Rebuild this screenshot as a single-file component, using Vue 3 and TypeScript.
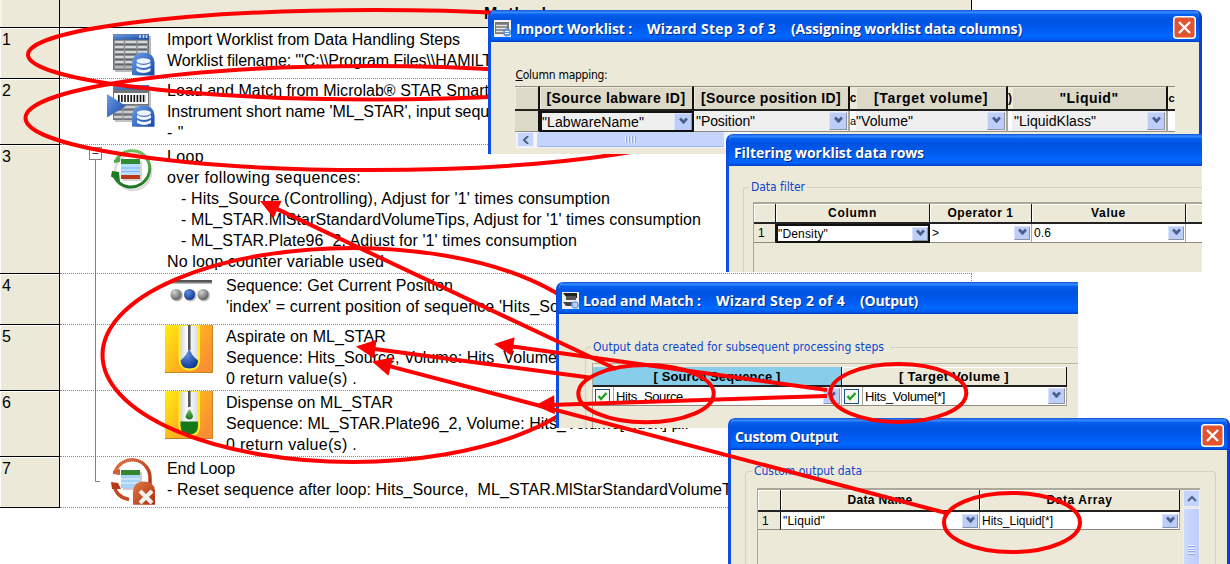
<script setup lang="ts">
interface Line { text: string; width: number; indent?: boolean }
interface Step { id: number; height: number; icon: string; nested?: boolean; lines: Line[] }
interface Arrow { from: [number, number]; to: [number, number] }

const steps: Step[] = [
  { id: 1, height: 51, icon: 'import', lines: [
    { text: 'Import Worklist from Data Handling Steps', width: 293 },
    { text: 'Worklist filename: \'"C:\\\\Program Files\\\\HAMILT', width: 325 },
  ] },
  { id: 2, height: 66, icon: 'load', lines: [
    { text: 'Load and Match from Microlab® STAR Smart', width: 322 },
    { text: "Instrument short name 'ML_STAR', input sequ", width: 322 },
    { text: '- "', width: 17 },
  ] },
  { id: 3, height: 129, icon: 'loop', lines: [
    { text: 'Loop', width: 37 },
    { text: 'over following sequences:', width: 194 },
    { text: "- Hits_Source (Controlling), Adjust for '1' times consumption", width: 429, indent: true },
    { text: "- ML_STAR.MlStarStandardVolumeTips, Adjust for '1' times consumption", width: 520, indent: true },
    { text: "- ML_STAR.Plate96_2, Adjust for '1' times consumption", width: 396, indent: true },
    { text: 'No loop counter variable used', width: 217 },
  ] },
  { id: 4, height: 51, icon: 'sequence', nested: true, lines: [
    { text: 'Sequence: Get Current Position', width: 227 },
    { text: "'index' = current position of sequence 'Hits_So", width: 333 },
  ] },
  { id: 5, height: 66, icon: 'aspirate', nested: true, lines: [
    { text: 'Aspirate on ML_STAR', width: 160 },
    { text: 'Sequence: Hits_Source, Volume: Hits_Volume', width: 331 },
    { text: '0 return value(s) .', width: 131 },
  ] },
  { id: 6, height: 66, icon: 'dispense', nested: true, lines: [
    { text: 'Dispense on ML_STAR', width: 167 },
    { text: 'Sequence: ML_STAR.Plate96_2, Volume: Hits_Volume[index] µl.', width: 463 },
    { text: '0 return value(s) .', width: 131 },
  ] },
  { id: 7, height: 51, icon: 'endloop', lines: [
    { text: 'End Loop', width: 68 },
    { text: '- Reset sequence after loop: Hits_Source,  ML_STAR.MlStarStandardVolumeT', width: 565 },
  ] },
]

const arrows: Arrow[] = [
  { from: [616, 369], to: [260, 201] },
  { from: [589, 377.5], to: [356, 346.5] },
  { from: [827, 390], to: [494, 344] },
  { from: [827, 396], to: [535, 405.5] },
  { from: [948, 513.5], to: [372, 361.5] },
]

function headPoints(a: Arrow): string {
  const dx = a.from[0] - a.to[0]
  const dy = a.from[1] - a.to[1]
  const len = Math.hypot(dx, dy)
  const ux = dx / len
  const uy = dy / len
  const bx = a.to[0] + ux * 19.5
  const by = a.to[1] + uy * 19.5
  return `${a.to[0]},${a.to[1]} ${bx - uy * 9.5},${by + ux * 9.5} ${bx + uy * 9.5},${by - ux * 9.5}`
}

function shaftEnd(a: Arrow): [number, number] {
  const dx = a.from[0] - a.to[0]
  const dy = a.from[1] - a.to[1]
  const len = Math.hypot(dx, dy)
  return [a.to[0] + (dx / len) * 15, a.to[1] + (dy / len) * 15]
}

// Tracks a label in or out so that it spans the given width in pixels.
const vFit = {
  mounted(el: HTMLElement, binding: { value: number }) {
    const n = (el.textContent ?? '').length
    const w = el.getBoundingClientRect().width
    if (n > 0) el.style.letterSpacing = `${(binding.value - w) / n}px`
  },
}
</script>

<template>
  <div class="stage">
    <div class="method">
      <div class="head">
        <div class="corner"></div>
        <div class="head-title"><span v-fit="63">Method</span></div>
      </div>
      <div v-for="s in steps" :key="s.id" class="row" :style="{ height: s.height + 'px' }">
        <div class="index">{{ s.id }}</div>
        <div class="content" :class="{ nested: s.nested }">
          <svg class="icon" width="48" height="48" viewBox="0 0 48 48">
            <defs>
              <linearGradient id="gBlue" x1="0" y1="0" x2="1" y2="1"><stop offset="0" stop-color="#6f9fe6" /><stop offset="1" stop-color="#1246a8" /></linearGradient>
              <linearGradient id="gOrange" x1="0" y1="0" x2="1" y2="0.6"><stop offset="0" stop-color="#ffef10" /><stop offset=".5" stop-color="#ffb81c" /><stop offset="1" stop-color="#f98f33" /></linearGradient>
              <linearGradient id="gGreen" x1="0" y1="0" x2="0" y2="1"><stop offset="0" stop-color="#6fbf5f" /><stop offset="1" stop-color="#1d7420" /></linearGradient>
              <linearGradient id="gRed" x1="0" y1="0" x2="1" y2="1"><stop offset="0" stop-color="#e07a4a" /><stop offset="1" stop-color="#b02c0c" /></linearGradient>
              <radialGradient id="gGrey" cx=".35" cy=".3" r=".8"><stop offset="0" stop-color="#d2d2d2" /><stop offset="1" stop-color="#555" /></radialGradient>
              <radialGradient id="gBall" cx=".35" cy=".3" r=".8"><stop offset="0" stop-color="#5f8fe0" /><stop offset="1" stop-color="#0a2f90" /></radialGradient>
              <linearGradient id="gGlass" x1="0" y1="0" x2="1" y2="0"><stop offset="0" stop-color="#c9d0dd" /><stop offset=".4" stop-color="#fff" /><stop offset="1" stop-color="#d5dae4" /></linearGradient>
            </defs>
            <g v-if="s.icon === 'import'">
              <rect x="8" y="8" width="36" height="36" fill="#888" opacity=".6" />
              <rect x="6" y="6" width="36" height="36" fill="#6b6f73" />
              <rect x="6" y="6.5" width="36" height="5" fill="url(#gBlue)" />
              <path d="M33 7v3M36.500 7v3M39.500 7v3" stroke="#cfe0ff" stroke-width="1.500" />
              <rect x="7.500" y="12.500" width="33" height="28" fill="#b4b8ba" />
              <path d="M8 16.500h32M8 21.500h32M8 26.500h32M8 31.500h32M8 36.500h32" stroke="#5f6468" stroke-width="1.800" />
              <path d="M8 14h32M8 19h32M8 24h32M8 29h32M8 34h32" stroke="#dfe2e3" stroke-width="1.700" />
              <path d="M17.500 13v27M30 13v27" stroke="#8b8f92" stroke-width="1.500" />
              <path d="M25 47V37q0-12 11-12.500q11 0 11.500 10V47.500H32Z" fill="url(#gBlue)" />
              <g fill="#eef5ff"><ellipse cx="36.500" cy="33" rx="7" ry="2.700" /><path d="M29.500 35q7 4 14 0v3q-7 4-14 0zM29.500 40q7 4 14 0v3q-7 4-14 0z" /></g>
            </g>
            <g v-else-if="s.icon === 'load'">
              <rect x="8" y="7" width="36" height="36" fill="#888" opacity=".5" />
              <rect x="6" y="6" width="36" height="35" fill="#70757a" />
              <rect x="6" y="6" width="36" height="4.500" fill="url(#gBlue)" />
              <rect x="7" y="14" width="34" height="11" fill="#fafafa" />
              <path d="M11 19.500h28" stroke="#111" stroke-width="7" stroke-dasharray="1.600 1.500" />
              <path d="M7 28h34M7 33h34M7 38h34" stroke="#c9cdcf" stroke-width="2.500" />
              <path d="M16 25v16M29 25v16" stroke="#8b8f92" />
              <path d="M0 15v23.500L19 27Z" fill="url(#gBlue)" />
              <path d="M25 47.500V39q0-12 11-12.500q11 0 11.500 10V47.800H29Z" fill="url(#gBlue)" />
              <g fill="#eef5ff"><ellipse cx="37" cy="34" rx="7" ry="2.700" /><path d="M30 36q7 4 14 0v3q-7 4-14 0zM30 41q7 4 14 0v3q-7 4-14 0z" /></g>
            </g>
            <g v-else-if="s.icon === 'loop'">
              <circle cx="26" cy="27" r="18" fill="none" stroke="#999" stroke-width="2.500" opacity=".35" />
              <path d="M8.500 17A18 18 0 0 1 40 13.500A18 18 0 1 1 8 33" fill="none" stroke="url(#gGreen)" stroke-width="3" />
              <path d="M4 31.500l1-5.500 7 1 1 10z" fill="#1d7b24" />
              <path d="M7 15l6-3v5l-6 1z" fill="#4faa49" />
              <rect x="16" y="16" width="19" height="20" fill="#999" opacity=".4" />
              <rect x="14" y="14" width="19" height="20" fill="#b9dcff" />
              <path d="M14 23h19M14 26.500h19" stroke="#7fb5f0" />
              <rect x="14" y="14" width="19" height="5" fill="#2e8b30" />
              <rect x="14" y="30" width="19" height="4" fill="#b83a18" />
            </g>
            <g v-else-if="s.icon === 'sequence'">
              <rect x="5" y="6" width="42" height="2.800" fill="#555" />
              <rect x="5" y="8.800" width="42" height="1.200" fill="#bbb" />
              <circle cx="12" cy="21.500" r="6" fill="#bbb" /><circle cx="25.500" cy="21.500" r="6" fill="#bbb" /><circle cx="39" cy="21.500" r="6" fill="#bbb" />
              <circle cx="11" cy="20.500" r="5.500" fill="url(#gGrey)" />
              <circle cx="24.500" cy="20.500" r="5.500" fill="url(#gBall)" />
              <circle cx="38" cy="20.500" r="5.500" fill="url(#gGrey)" />
            </g>
            <g v-else-if="s.icon === 'aspirate' || s.icon === 'dispense'">
              <rect width="48" height="48" fill="url(#gOrange)" />
              <path d="M0 47.500H47.500V0" fill="none" stroke="#c98325" />
              <path d="M14.500 0V34Q15 44.500 24.500 44.500T34 34V0Z" fill="url(#gGlass)" stroke="#ffee22" stroke-width="2" />
              <template v-if="s.icon === 'aspirate'">
                <path d="M24.300 0V25" stroke="#555" stroke-width="2.600" />
                <path d="M24.300 23Q26 30 33 35.500Q33 43.500 24.500 43.500T15.500 35.500Q22 30 24.300 23Z" fill="url(#gBall)" />
              </template>
              <template v-else>
                <path d="M24.300 0V16" stroke="#555" stroke-width="2.600" />
                <path d="M24.300 18Q28.500 24 28 26Q27 28.500 24.300 28.500T20.500 26Q20.500 24 24.300 18Z" fill="url(#gGreen)" />
                <path d="M15.500 30.500H33V35Q33 43.500 24.500 43.500T15.500 35Z" fill="#15781b" />
              </template>
            </g>
            <g v-else>
              <path d="M8 15A18 18 0 0 1 43 22V30" fill="none" stroke="url(#gRed)" stroke-width="3.400" />
              <path d="M7 28Q9 40 22 42.500" fill="none" stroke="#c24a22" stroke-width="3.400" />
              <path d="M4 25l7 1 3 6-9 0z" fill="#b53a18" />
              <path d="M6 14l7-2v6l-7-1z" fill="#c8603a" />
              <rect x="16" y="15" width="19" height="18" fill="#999" opacity=".5" />
              <rect x="14" y="13" width="19" height="18" fill="#a9d2f5" />
              <path d="M14 22h19M14 26h19" stroke="#e8f5ff" />
              <rect x="14" y="13" width="19" height="5" fill="#34862f" />
              <path d="M26 47.800V36q0-11 10.500-11.500q10.500 0 11.500 9V47.800H30Z" fill="url(#gRed)" />
              <path d="M33 34L45 46M45 34L33 46" stroke="#f4f1ee" stroke-width="4" />
            </g>
          </svg>
          <div class="lines">
            <div v-for="l in s.lines" :key="l.text" class="line" :class="{ indent: l.indent }">
              <span v-fit="l.width">{{ l.text }}</span>
            </div>
          </div>
        </div>
      </div>
    </div>

    <svg class="overlay" width="1230" height="564">
      <path d="M95.500 160V481.500H100" fill="none" stroke="#808080" />
      <rect x="89.500" y="147.500" width="12" height="12" fill="#fff" stroke="#808080" />
      <path d="M92.500 153.500h6" stroke="#333" />
      <g fill="none" stroke="#f00" stroke-width="4">
        <ellipse cx="374" cy="54.700" rx="346" ry="44.700" />
        <ellipse cx="370" cy="118" rx="344.500" ry="52" />
        <ellipse cx="352.500" cy="355" rx="250" ry="107" />
      </g>
    </svg>

    <section class="window import">
      <header class="title">
        <svg class="app" width="17" height="17" viewBox="0 0 17 17">
          <rect width="17" height="17" fill="#f4f4f4" />
          <rect x="1" y="2" width="14" height="12" fill="#777" />
          <path d="M2 5.500h11M2 8.500h11M2 11.500h11" stroke="#e8e8e8" stroke-width="1.300" />
          <circle cx="13" cy="12.500" r="4" fill="#5d94dd" /><path d="M11 11.500h4M11 13.500h4" stroke="#fff" />
        </svg>
        <span v-fit="116">Import Worklist :</span>
        <span v-fit="129" class="gap15">Wizard Step 3 of 3</span>
        <span v-fit="231" class="gap15">(Assigning worklist data columns)</span>
        <svg class="close" width="23" height="23" viewBox="0 0 23 23"><rect x=".75" y=".75" width="21.500" height="21.500" rx="3" fill="#e2532f" stroke="#fff" stroke-width="1.500" /><path d="M6 6L17 17M17 6L6 17" stroke="#fff" stroke-width="2.400" /></svg>
      </header>
      <div class="body">
        <div class="tahoma caption"><span v-fit="92"><u>C</u>olumn mapping:</span></div>
        <div class="grid g1">
          <div class="h"></div>
          <div class="h"><span v-fit="139">[Source labware ID]</span></div>
          <div class="h"><span v-fit="140">[Source position ID]</span></div>
          <div class="h sliver">c</div>
          <div class="h"><span v-fit="114">[Target volume]</span></div>
          <div class="h sliver">)</div>
          <div class="h"><span v-fit="59">"Liquid"</span></div>
          <div class="h sliver last">c</div>
          <div class="r no"></div>
          <div class="r focus"><span v-fit="102">"LabwareName"</span><i class="dd"></i></div>
          <div class="r"><span v-fit="59">"Position"</span><i class="dd"></i></div>
          <div class="r bit">a</div>
          <div class="r vol"><span v-fit="57">"Volume"</span><i class="dd"></i></div>
          <div class="r bit"></div>
          <div class="r"><span v-fit="82">"LiquidKlass"</span><i class="dd"></i></div>
          <div class="r bit"></div>
        </div>
        <div class="hscroll">
          <div class="sbtn"><svg width="8" height="8" viewBox="0 0 8 8"><path d="M6 0L2 4L6 8" fill="none" stroke="#4d6185" stroke-width="2" /></svg></div>
          <div class="hthumb"><i></i><i></i><i></i><i></i></div>
        </div>
      </div>
    </section>

    <section class="window filter">
      <header class="title"><span v-fit="190">Filtering worklist data rows</span></header>
      <div class="body">
        <fieldset class="tahoma">
          <legend><span v-fit="54">Data filter</span></legend>
          <div class="frame">
            <div class="grid g2">
              <div class="h"></div>
              <div class="h"><span v-fit="49">Column</span></div>
              <div class="h"><span v-fit="66">Operator 1</span></div>
              <div class="h"><span v-fit="35">Value</span></div>
              <div class="h"></div>
              <div class="r no">1</div>
              <div class="r focus"><span v-fit="50">"Density"</span><i class="dd"></i></div>
              <div class="r">&gt;<i class="dd"></i></div>
              <div class="r"><span v-fit="17">0.6</span><i class="dd"></i></div>
              <div class="r"></div>
            </div>
          </div>
        </fieldset>
      </div>
    </section>

    <section class="window load">
      <header class="title">
        <svg class="app" width="17" height="17" viewBox="0 0 17 17">
          <rect width="17" height="17" fill="#f0f0f0" />
          <path d="M1 1h14v5H5z" fill="#222" /><rect x="4" y="4" width="10" height="4" fill="#555" /><path d="M1 10h13l-2 4H4z" fill="#444" />
          <circle cx="13" cy="13" r="3.800" fill="#6fa3e4" /><path d="M11 12h4M11 14h4" stroke="#fff" />
        </svg>
        <span v-fit="118">Load and Match :</span>
        <span v-fit="129" class="gap15">Wizard Step 2 of 4</span>
        <span v-fit="58" class="gap15">(Output)</span>
      </header>
      <div class="body">
        <fieldset class="tahoma">
          <legend><span v-fit="291">Output data created for subsequent processing steps</span></legend>
          <div class="frame">
            <div class="grid g3">
              <div class="h sky"><span v-fit="127">[ Source Sequence ]</span></div>
              <div class="h"><span v-fit="110">[ Target Volume ]</span></div>
              <div class="r"><svg class="check" width="15" height="15" viewBox="0 0 15 15"><rect x=".5" y=".5" width="14" height="14" fill="#f6f6f2" stroke="#1c5180" /><path d="M3.500 7L6 10L11.500 4" fill="none" stroke="#21a121" stroke-width="2.400" /></svg><div class="val"><span v-fit="67">Hits_Source</span></div><i class="dd"></i></div>
              <div class="r"><svg class="check" width="15" height="15" viewBox="0 0 15 15"><rect x=".5" y=".5" width="14" height="14" fill="#f6f6f2" stroke="#1c5180" /><path d="M3.500 7L6 10L11.500 4" fill="none" stroke="#21a121" stroke-width="2.400" /></svg><div class="val"><span v-fit="80">Hits_Volume[*]</span></div><i class="dd"></i></div>
            </div>
          </div>
        </fieldset>
      </div>
    </section>

    <section class="window custom">
      <header class="title">
        <span v-fit="103">Custom Output</span>
        <svg class="close" width="23" height="23" viewBox="0 0 23 23"><rect x=".75" y=".75" width="21.500" height="21.500" rx="3" fill="#e2532f" stroke="#fff" stroke-width="1.500" /><path d="M6 6L17 17M17 6L6 17" stroke="#fff" stroke-width="2.400" /></svg>
      </header>
      <div class="body">
        <fieldset class="tahoma">
          <legend><span v-fit="108">Custom output data</span></legend>
          <div class="frame">
            <div class="grid g4">
              <div class="h"></div>
              <div class="h"><span v-fit="65">Data Name</span></div>
              <div class="h"><span v-fit="66">Data Array</span></div>
              <div class="r no">1</div>
              <div class="r"><span v-fit="42">"Liquid"</span><i class="dd"></i></div>
              <div class="r"><span v-fit="71">Hits_Liquid[*]</span><i class="dd"></i></div>
            </div>
            <div class="vscroll">
              <div class="sbtn"><svg width="10" height="8" viewBox="0 0 10 8"><path d="M1 6L5 2L9 6" fill="none" stroke="#4d6185" stroke-width="2" /></svg></div>
              <div class="vthumb"><i></i><i></i><i></i><i></i></div>
            </div>
          </div>
        </fieldset>
      </div>
    </section>

    <svg class="overlay" width="1230" height="564">
      <g fill="none" stroke="#f00" stroke-width="4">
        <ellipse cx="646" cy="393.700" rx="67.700" ry="28.600" />
        <ellipse cx="898.300" cy="393" rx="68" ry="29" />
        <ellipse cx="1012" cy="522.500" rx="68" ry="29.500" />
        <line v-for="(a, i) in arrows" :key="i" :x1="a.from[0]" :y1="a.from[1]" :x2="shaftEnd(a)[0]" :y2="shaftEnd(a)[1]" />
      </g>
      <polygon v-for="(a, i) in arrows" :key="'h' + i" :points="headPoints(a)" fill="#f00" />
    </svg>
  </div>
</template>

<style scoped>
.stage { position: relative; width: 1230px; height: 564px; overflow: hidden; background: #fff; font-family: "Liberation Sans", Arial, sans-serif; color: #000; }
.stage span { display: inline-block; white-space: pre; flex: none; }
.method { width: 972px; font-size: 16px; }
.head { display: flex; height: 28px; box-sizing: border-box; background: #ece9d8; border-bottom: 1px solid #000; border-right: 1px solid #000; }
.corner { width: 59px; border-right: 1px solid #000; box-shadow: inset 2px 0 #f6f4ea; }
.head-title { flex: 1; text-align: center; font-weight: bold; line-height: 28px; }
.row { display: flex; box-sizing: border-box; }
.index { width: 57px; background: #ece9d8; border-right: 1px solid #000; border-bottom: 1px solid #000; line-height: 21px; padding: 1px 0 0 2px; box-shadow: inset 1px 1px #fff; }
.content { flex: 1; display: flex; padding-left: 47px; border-bottom: 1px dotted #8f8b80; border-right: 1px dotted #8f8b80; }
.content.nested { padding-left: 105px; }
.icon { flex: none; }
.lines { padding: 1px 0 0 12px; }
.nested .lines { padding-left: 13px; }
.line { height: 21px; line-height: 21px; white-space: pre; }
.line.indent { padding-left: 14px; }
.overlay { position: absolute; left: 0; top: 0; }

.window { position: absolute; box-sizing: border-box; background: #ece9d8; border-left: 3px solid #0a50e0; overflow: hidden; border-top-left-radius: 7px; }
.import { left: 488px; top: 10px; width: 714px; height: 144px; border-right: 3px solid #0a3fd0; border-top-right-radius: 7px; }
.filter { left: 726px; top: 134px; width: 476px; height: 138px; }
.load { left: 556px; top: 282px; width: 522px; height: 146px; }
.custom { left: 728px; top: 418px; width: 502px; height: 146px; border-right: 3px solid #0a3fd0; border-top-right-radius: 7px; }
.title { display: flex; align-items: center; height: 32px; box-sizing: border-box; margin: 0 -3px; padding: 4px 6px 0 8px; background: linear-gradient(#0a52d8 0, #3a8cff 7%, #0660ee 14%, #0053e1 30%, #0059ee 55%, #0067ff 80%, #0062f8 90%, #0040c8 100%); color: #fff; font: bold 14px "Open Sans", "Noto Sans", sans-serif; text-shadow: 1px 1px #0a2a80; }
.custom .title { padding-left: 7px; }
.import .title, .load .title { padding-left: 6px; }
.import .app { margin-right: 5px; }
.load .app { margin-right: 4px; }
.app { flex: none; }
.gap15 { margin-left: 15px; }
.close { margin-left: auto; flex: none; margin-top: -2px; }
.tahoma { font: 12px "DejaVu Sans Condensed", "DejaVu Sans", sans-serif; }
.caption { padding: 25px 0 0 24.500px; height: 44px; box-sizing: border-box; line-height: 16px; }

fieldset { min-width: 0; margin: 0; padding: 0 0 0 9px; border: 1px solid #d3d0bd; border-bottom: 0; border-top-left-radius: 4px; }
legend { margin-left: -4px; padding: 0 2px; height: 16px; line-height: 16px; color: #0b46d0; }
.filter fieldset { margin: 13px -4px 0 14px; height: 100px; }
.filter .frame { margin-top: 7px; }
.load fieldset { margin: 25px -4px 0 26px; height: 100px; padding-left: 6px; }
.load legend { margin-left: -1px; padding-right: 6px; }
.load .frame { margin-top: 8px; border-left: 1px solid #aca899; border-top: 1px solid #b8b4a4; padding-top: 3px; height: 80px; }
.custom fieldset { margin: 13px 11px 0 14px; height: 110px; padding-left: 11px; border-top-right-radius: 4px; }
.custom legend { margin-left: -5px; }
.custom .frame { margin-top: 9px; display: flex; width: 443px; border: 1px solid #aca899; border-right: 0; }
.filter .frame, .custom .frame { border-left: 1px solid #aca899; border-top: 2px solid #aca899; height: 90px; box-sizing: border-box; }

.grid { display: grid; font-family: "Liberation Sans", Arial, sans-serif; }
.h, .r { box-sizing: border-box; display: flex; align-items: center; overflow: hidden; }
.h { justify-content: center; font-weight: bold; background: #ece9d8; border-right: 1px solid #111; border-bottom: 2px solid #222; box-shadow: inset 1px 1px #fff; }
.r { background: #fff; border-right: 1px solid #aca899; border-bottom: 1px solid #8f8b80; padding: 0 1px 0 2px; }
.r.no { background: #ece9d8; border-right: 1px solid #111; padding-left: 4px; }
.r.focus { border: 2px solid #111; padding: 0; }
.dd { margin-left: auto; flex: none; width: 16px; height: 14px; box-sizing: border-box; background: #bccdf8; border: 1px solid #d9e3fb; border-right-color: #8c93a5; border-bottom-color: #8c93a5; position: relative; }
.dd::after { content: ""; position: absolute; left: 4px; top: 0; width: 4px; height: 4px; border: solid #48608f; border-width: 0 3px 3px 0; transform: rotate(45deg) scale(.9); }
.g1 { margin-left: 24px; grid-template-columns: 25px 154px 156px 6px 152px 4px 156px 7px; grid-template-rows: 25px 21px; width: 660px; font-size: 14px; }
.g1 .h { background: #dcd9c8; border-top: 1px solid #908c80; border-right-width: 2px; box-shadow: inset 1px 1px #efedde; }
.g1 .h.sliver { font-size: 12px; border-right: 0; background: #ece9d8; }
.g1 .h.sliver.last { font-size: 11px; }
.g1 .r { background: #efefef; border-right-width: 2px; }
.g1 .r.vol { padding-left: 0; }
.g1 .r.no { background: #dcd9c8; }
.g1 .r.bit { background: #fff; padding: 0; font-size: 11px; border-right: 0; }
.g1 .dd { width: 18px; height: 18px; }
.g1 .dd::after { left: 5px; top: 2px; }
.g2 { grid-template-columns: 22px 154px 102px 154px 40px; grid-template-rows: 20px 19px; font-size: 12px; width: 480px; }
.g3 { grid-template-columns: 249px 225px; grid-template-rows: 20px 19px; font-size: 13px; }
.g3 .sky { background: #87ceeb; box-shadow: none; }
.g3 .r { padding-left: 2px; }
.g3 .dd { height: 16px; width: 17px; }
.g3 .dd::after { top: 1px; }
.check { flex: none; }
.val { align-self: stretch; display: flex; align-items: center; margin-left: 3px; padding-left: 2px; border-left: 1px solid #aca899; }
.g4 { grid-template-columns: 23px 199px 200px; grid-template-rows: 22px 18px; font-size: 12px; width: 422px; flex: none; }

.hscroll { display: flex; width: 235px; height: 16px; margin-left: 25px; background: #f4f4fb; gap: 3px; box-sizing: border-box; padding: 0 0 1px 1px; }
.sbtn { width: 17px; box-sizing: border-box; display: flex; align-items: center; justify-content: center; background: #c5d4fb; border: 1px solid #e8eefd; }
.hthumb { width: 187px; display: flex; align-items: center; justify-content: center; gap: 1px; background: #c5d4fb; border-bottom: 1px solid #98b0e8; border-radius: 2px; }
.hthumb i { width: 1px; height: 7px; background: #eef3ff; box-shadow: 1px 0 #8fa8e0; margin-right: 1px; }
.vscroll { margin-left: 3px; width: 17px; display: flex; flex-direction: column; gap: 1px; }
.vscroll .sbtn { width: 17px; height: 17px; flex: none; }
.vthumb { flex: 1; box-sizing: border-box; background: linear-gradient(90deg, #cbdafd, #bccdf8); border: 1px solid #e8eefd; border-bottom: 0; padding: 36px 0 0 4px; }
.vthumb i { display: block; width: 7px; height: 1px; background: #eef3ff; box-shadow: 0 1px #8fa8e0; margin-bottom: 1.500px; }
</style>
